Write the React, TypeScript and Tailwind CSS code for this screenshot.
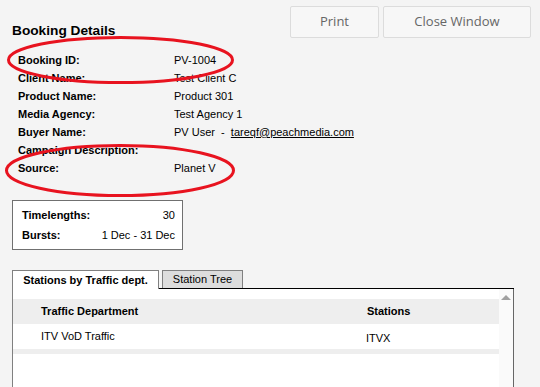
import React from "react";

const rows: Array<{ label: string; value?: React.ReactNode }> = [
  { label: "Booking ID:", value: "PV-1004" },
  { label: "Client Name:", value: "Test Client C" },
  { label: "Product Name:", value: "Product 301" },
  { label: "Media Agency:", value: "Test Agency 1" },
  {
    label: "Buyer Name:",
    value: (
      <>
        PV User&nbsp; -&nbsp; <span className="underline">tareqf@peachmedia.com</span>
      </>
    ),
  },
  { label: "Campaign Description:" },
  { label: "Source:", value: "Planet V" },
];

export default function App() {
  return (
    <div
      className="relative w-[540px] h-[387px] overflow-hidden bg-[#f4f4f4] text-black"
      style={{ fontFamily: '"Liberation Sans", Arial, sans-serif' }}
    >
      {/* Header */}
      <div className="flex items-end pt-[6px] pr-[9px]">
        <h1 className="pl-3 text-[13.7px] leading-[16px] font-bold mb-[-1px]">
          Booking Details
        </h1>
        <div className="ml-auto flex gap-[4px] font-['Open_Sans',sans-serif] text-[13px] text-[#666]">
          <button className="w-[89px] h-[32px] bg-[#f7f7f7] border border-[#dcdcdc] rounded-[2px]">
            Print
          </button>
          <button className="w-[148px] h-[32px] bg-[#f7f7f7] border border-[#dcdcdc] rounded-[2px]">
            Close Window
          </button>
        </div>
      </div>

      {/* Details */}
      <div className="mt-[13px] text-[11px]">
        {rows.map((r) => (
          <div key={r.label} className="flex items-center h-[18px] pl-[18px]">
            <span className="w-[156px] shrink-0 font-bold">{r.label}</span>
            <span>{r.value}</span>
          </div>
        ))}
      </div>

      {/* Summary box */}
      <div className="ml-3 mt-[23px] w-[171px] h-[50px] bg-white border border-[#707070] pt-[4px] pl-[9px] pr-[7px] text-[11px]">
        <div className="flex items-center justify-between h-[20px]">
          <span className="font-bold">Timelengths:</span>
          <span>30</span>
        </div>
        <div className="flex items-center justify-between h-[20px]">
          <span className="font-bold">Bursts:</span>
          <span>1 Dec - 31 Dec</span>
        </div>
      </div>

      {/* Tabs */}
      <div className="mt-[20px] ml-3 flex items-end w-[502px] text-[11px]">
        <div className="w-[147px] h-[19px] bg-white border border-b-0 border-[#808080] flex items-center justify-center font-bold">
          Stations by Traffic dept.
        </div>
        <div className="flex-1 flex items-end border-b border-black h-[18px]">
          <div className="ml-[3px] w-[81px] h-[18px] bg-[#dddddd] border border-b-0 border-[#808080] flex items-center justify-center">
            Station Tree
          </div>
        </div>
      </div>
      <div className="ml-3 w-[502px] h-[120px] bg-white border-l border-l-[#808080] border-r border-r-[#666] flex text-[11px]">
        <div className="flex-1 pt-[10px]">
          <div className="flex items-center h-[25px] bg-[#eeeeee] font-bold">
            <span className="pl-[28px] w-[354px]">Traffic Department</span>
            <span>Stations</span>
          </div>
          <div className="flex items-center h-[25px]">
            <span className="pl-[28px] w-[353px]">ITV VoD Traffic</span>
            <span className="mt-[3px]">ITVX</span>
          </div>
          <div className="h-[5px] bg-[#eeeeee]" />
        </div>
        <div className="w-[14px] bg-[#fafafa] flex justify-center pt-[6px]">
          <div className="w-0 h-0 border-l-[5px] border-r-[5px] border-b-[5px] border-l-transparent border-r-transparent border-b-[#a0a0a0]" />
        </div>
      </div>

      {/* Red annotation ellipses */}
      <svg
        className="absolute inset-0 pointer-events-none"
        width="540"
        height="387"
        viewBox="0 0 540 387"
      >
        <ellipse cx="120.5" cy="60" rx="112" ry="22.5" fill="none" stroke="#e8131f" strokeWidth="3" />
        <ellipse cx="120" cy="170.5" rx="113.5" ry="25" fill="none" stroke="#e8131f" strokeWidth="3" />
      </svg>
    </div>
  );
}
